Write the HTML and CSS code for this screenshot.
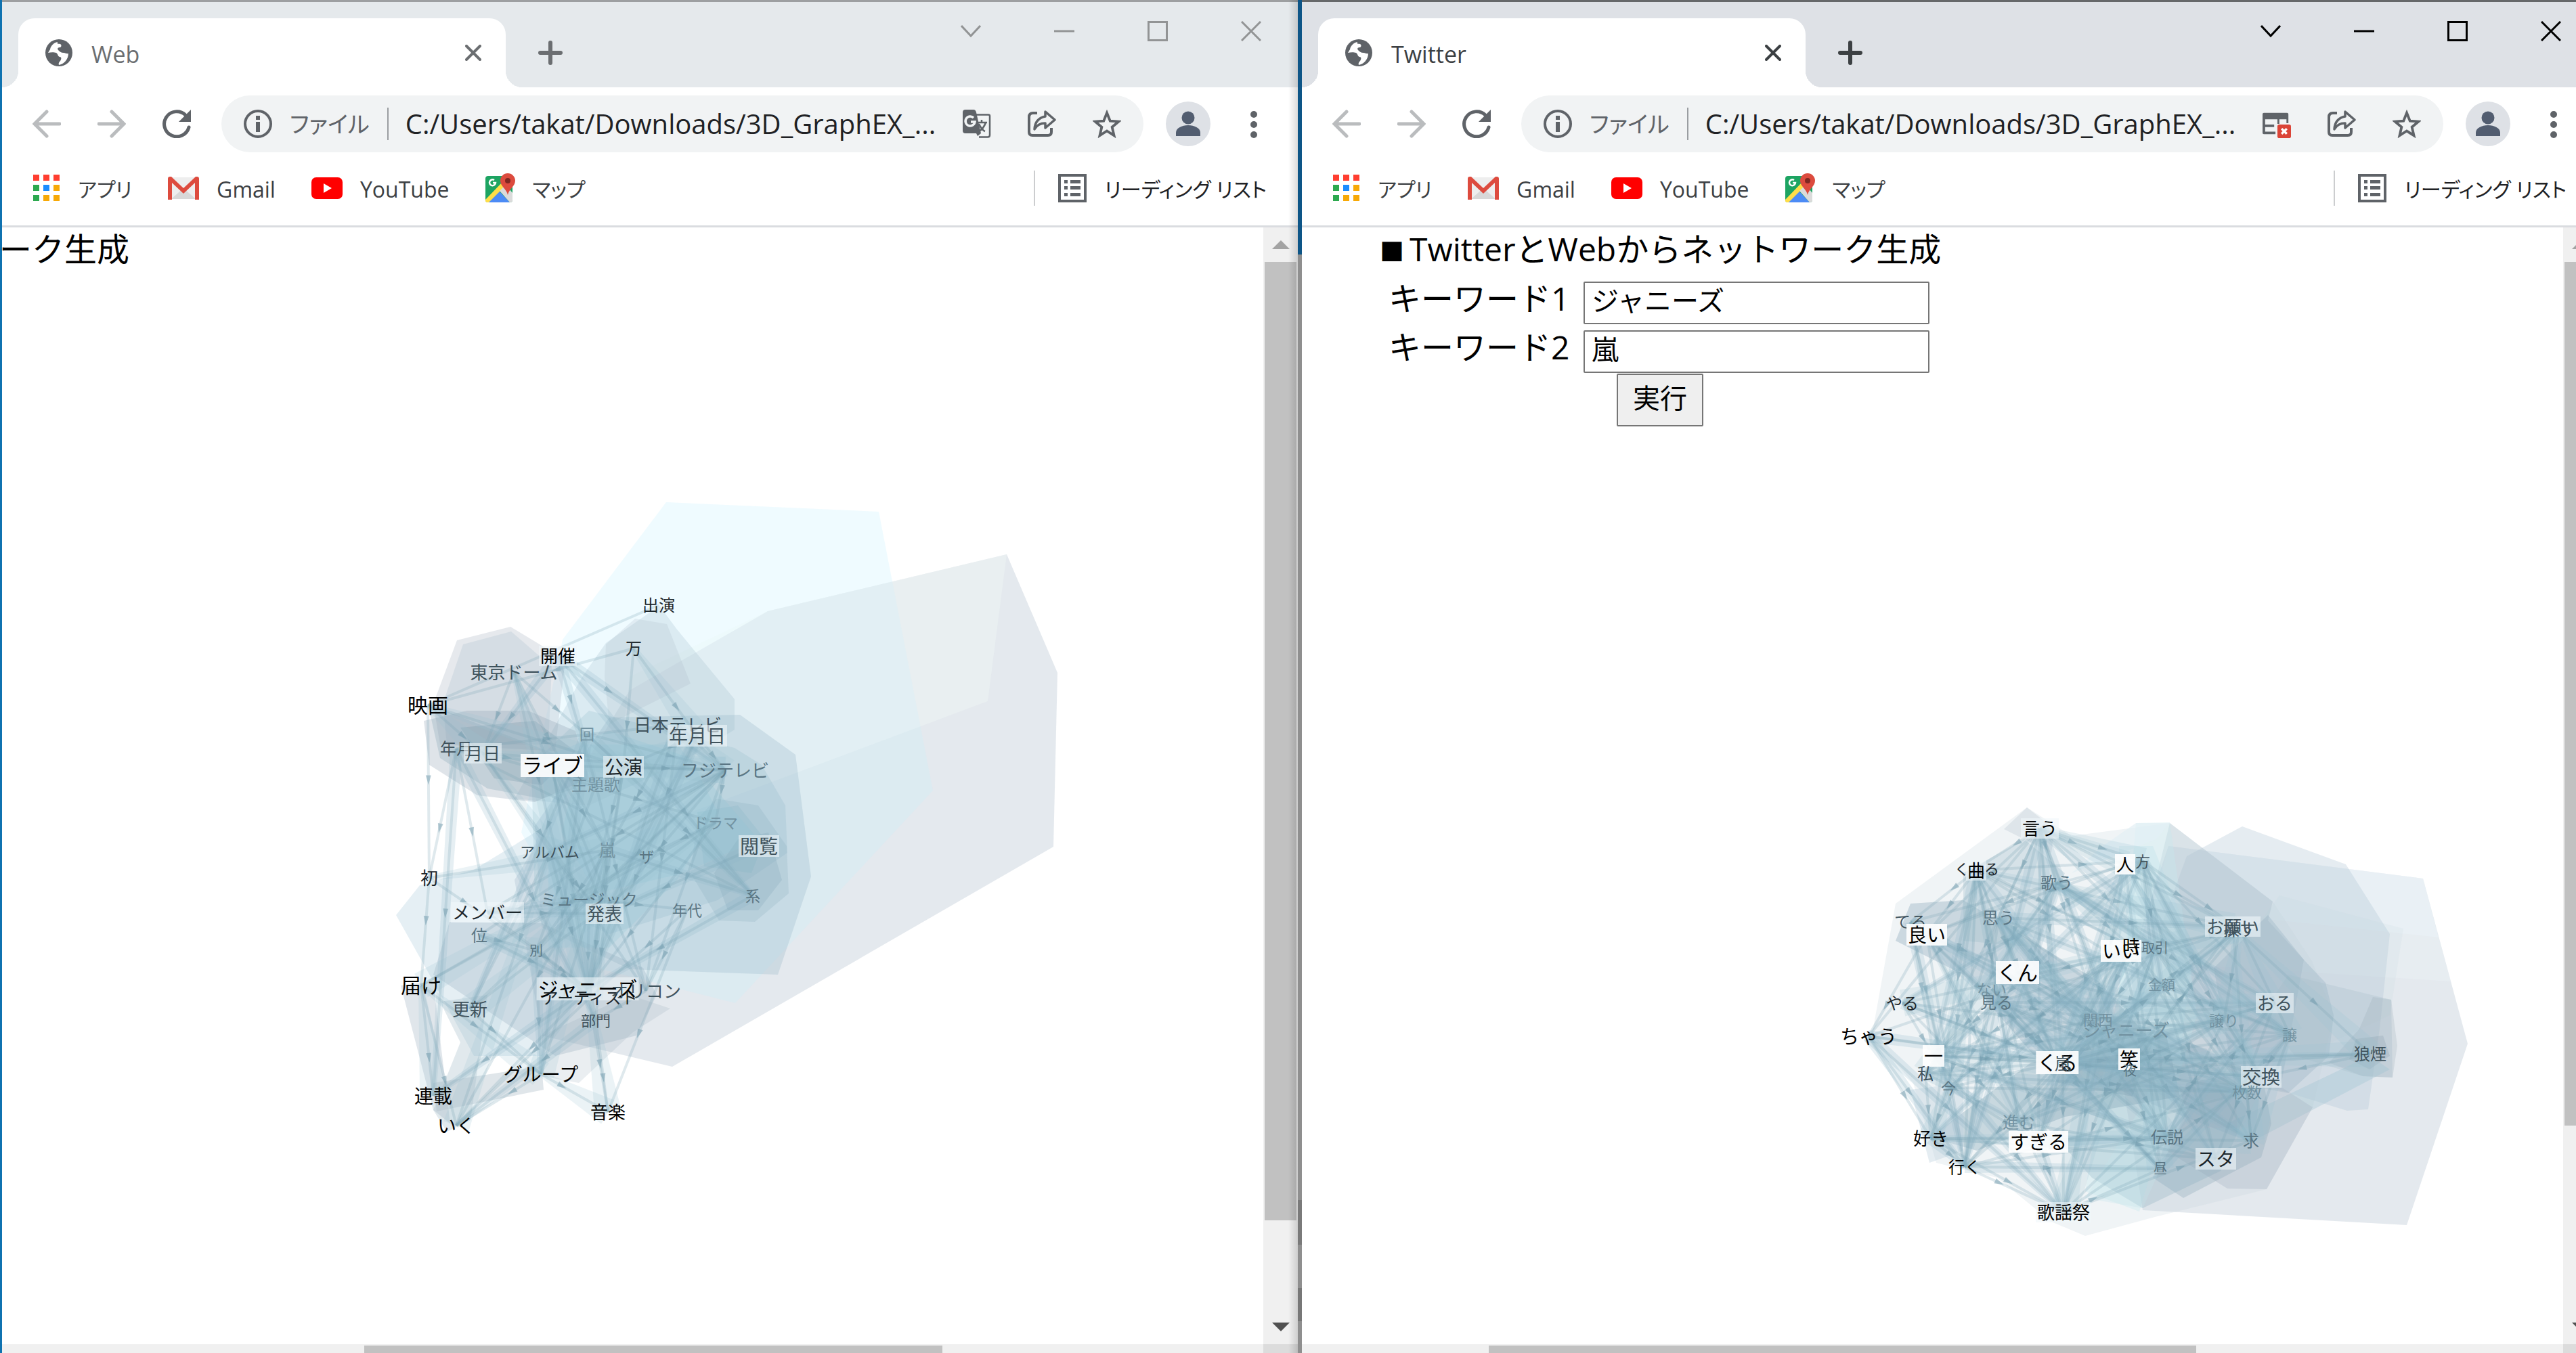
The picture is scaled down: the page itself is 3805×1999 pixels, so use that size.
FILE: index.html
```html
<!DOCTYPE html>
<html lang="ja">
<head>
<meta charset="utf-8">
<title>Web / Twitter</title>
<link rel="stylesheet" href="styles.css">
</head>
<body>
<svg class="sprite" aria-hidden="true">
  <symbol id="i-globe" viewBox="0 0 42 42"><circle cx="21" cy="21" r="20" fill="#5f6368"/><path fill="#fff" d="M19 5c-5 1-10 5-11 11l-3 5c4-1 9-1 12 0 3 2 2 5 5 6 3 0 3 3 1 6-2 2-3 4-2 6 7-1 14-8 14-17-3 1-4-1-7-1-4 0-6-2-8-4-2-3 0-4 3-4 2-1 2-4 0-5-3-1-5 1-4-3z"/></symbol>
  <symbol id="i-close" viewBox="0 0 24 24"><path d="M2 2l20 20M22 2L2 22" fill="none" stroke="currentColor" stroke-width="4" stroke-linecap="round"/></symbol>
  <symbol id="i-plus" viewBox="0 0 36 36"><path d="M18 3v30M3 18h30" fill="none" stroke="currentColor" stroke-width="6" stroke-linecap="round"/></symbol>
  <symbol id="i-chev" viewBox="0 0 30 30"><path d="M1 7l14 15L29 7" fill="none" stroke="currentColor" stroke-width="3"/></symbol>
  <symbol id="i-min" viewBox="0 0 30 30"><path d="M0 15h30" fill="none" stroke="currentColor" stroke-width="3"/></symbol>
  <symbol id="i-max" viewBox="0 0 30 30"><path d="M1.500 1.500h27v27h-27z" fill="none" stroke="currentColor" stroke-width="3"/></symbol>
  <symbol id="i-x" viewBox="0 0 30 30"><path d="M1 1l28 28M29 1L1 29" fill="none" stroke="currentColor" stroke-width="3"/></symbol>
  <symbol id="i-back" viewBox="0 0 42 42"><path d="M40 21H4M21 3L3 21l18 18" fill="none" stroke="currentColor" stroke-width="5" stroke-linecap="round"/></symbol>
  <symbol id="i-fwd" viewBox="0 0 42 42"><path d="M2 21h36M21 3l18 18-18 18" fill="none" stroke="currentColor" stroke-width="5" stroke-linecap="round"/></symbol>
  <symbol id="i-reload" viewBox="0 0 42 42"><path d="M39 26A18.500 18.500 0 1 1 34 8" fill="none" stroke="currentColor" stroke-width="5" stroke-linecap="round"/><path d="M42 0v18H24z" fill="currentColor"/></symbol>
  <symbol id="i-info" viewBox="0 0 42 42"><circle cx="21" cy="21" r="19" fill="none" stroke="currentColor" stroke-width="4"/><path d="M18 18h6v15h-6zM18 9h6v6h-6z" fill="currentColor"/></symbol>
  <symbol id="i-translate" viewBox="0 0 42 42"><path d="M20 7.500h18q2 0 2 2v28q0 3-3 3H24" fill="none" stroke="currentColor" stroke-width="2.500"/><path d="M4 0h12q3 0 4 4l7 31-5 4-2-4H4q-4 0-4-4V4q0-4 4-4z" fill="currentColor"/><path d="M16 12a7 7 0 1 0 2 6h-6" fill="none" stroke="#f1f3f4" stroke-width="3.500"/><path d="M21 19h15M28 15v4M34 19q-3 9-10 13M24 21q4 9 9 11" fill="none" stroke="currentColor" stroke-width="2.500"/></symbol>
  <symbol id="i-share" viewBox="0 0 42 42"><path d="M14 5H8Q2 5 2 11v22q0 5 5 5h23q5 0 5-5v-6" fill="none" stroke="currentColor" stroke-width="4"/><path d="M26 3l14 12-14 12v-7q-11 0-16 9 1-16 16-19z" fill="none" stroke="currentColor" stroke-width="3.500" stroke-linejoin="round"/></symbol>
  <symbol id="i-star" viewBox="0 0 44 44"><path d="M22 5l5 12.500 13 1-10 8.500 3 13-11-7-11 7 3-13-10-8.500 13-1z" fill="none" stroke="currentColor" stroke-width="4"/></symbol>
  <symbol id="i-blocked" viewBox="0 0 44 44"><path d="M2 5h36q2 0 2 2v14h-3v-6H26v7h-3v-7H4v8h14v4H4v7h16v4H2q-2 0-2-2V7q0-2 2-2z" fill="currentColor"/><rect x="23" y="23" width="21" height="21" rx="3" fill="#db4437"/><path d="M29.500 29.500l8 8M37.500 29.500l-8 8" stroke="#fff" stroke-width="3.500"/></symbol>
  <symbol id="i-user" viewBox="0 0 66 66"><circle cx="33" cy="33" r="33" fill="#dee1e6"/><circle cx="33" cy="24" r="9.500" fill="#525d70"/><path d="M15 51v-5c0-7 9-11 18-11s18 4 18 11v5z" fill="#525d70"/></symbol>
  <symbol id="i-dots" viewBox="0 0 12 42"><circle cx="6" cy="7" r="5" fill="currentColor"/><circle cx="6" cy="22" r="5" fill="currentColor"/><circle cx="6" cy="37" r="5" fill="currentColor"/></symbol>
  <symbol id="i-apps" viewBox="0 0 40 40"><path fill="#ff3e30" d="M0 0h9v9H0zM15 0h9v9h-9zM30 0h9v9h-9z"/><path fill="#2da94f" d="M0 15h9v9H0zM0 30h9v9H0z"/><path fill="#1a8cff" d="M15 15h9v9h-9z"/><path fill="#f7a907" d="M30 15h9v9h-9zM15 30h9v9h-9zM30 30h9v9h-9z"/></symbol>
  <symbol id="i-gmail" viewBox="0 0 46 36"><path fill="#eee" d="M4 2h38v32H4z"/><path fill="#d8d8d8" d="M5 34l18-16 18 16z"/><path fill="#dd4b3e" d="M0 4q0-3 3-3h2l18 17L41 1h2q3 0 3 3v31h-6V10L23 26 6 10v25H0z"/></symbol>
  <symbol id="i-yt" viewBox="0 0 46 32"><rect width="46" height="32" rx="7" fill="#f00"/><path fill="#fff" d="M18 9l12 7-12 7z"/></symbol>
  <symbol id="i-map" viewBox="0 0 44 44"><rect x="0" y="4" width="40" height="39" rx="4" fill="#1da462"/><path fill="#4c8bf5" d="M4 43l16-17 16 17z"/><path fill="#ffde48" d="M0 39L27 11l5 5L5 43H3q-3 0-3-3z"/><path fill="#dbdbdb" d="M21 26l9-9 10 12v11q0 3-4 3z"/><path fill="none" stroke="#fff" stroke-width="2.500" d="M13 10a4.500 4.500 0 1 0 2 4h-4"/><path fill="#dc4b3e" d="M33 0a11 11 0 0 1 11 11c0 8-9 12-11 21-2-9-11-13-11-21A11 11 0 0 1 33 0z"/><circle cx="33" cy="11" r="4" fill="#7e2721"/></symbol>
  <symbol id="i-list" viewBox="0 0 42 42"><path d="M2 2h38v38H2z" fill="none" stroke="currentColor" stroke-width="4"/><path fill="currentColor" d="M9 9h5v5H9zM18 9h15v5H18zM9 18h5v5H9zM18 18h15v5H18zM9 28h5v5H9zM18 28h15v5H18z"/></symbol>
</svg>

<div class="desktop">
  <section class="window window--idle">
    <header class="tabstrip">
      <div class="tab">
        <svg class="ico42"><use href="#i-globe"/></svg>
        <span class="tab-title">Web</span>
        <button class="bare" aria-label="タブを閉じる"><svg class="ico24"><use href="#i-close"/></svg></button>
      </div>
      <button class="bare newtab" aria-label="新しいタブ"><svg class="ico36"><use href="#i-plus"/></svg></button>
      <div class="winbtns">
        <button class="bare" aria-label="タブを検索"><svg class="ico30"><use href="#i-chev"/></svg></button>
        <button class="bare" aria-label="最小化"><svg class="ico30"><use href="#i-min"/></svg></button>
        <button class="bare" aria-label="最大化"><svg class="ico30"><use href="#i-max"/></svg></button>
        <button class="bare" aria-label="閉じる"><svg class="ico30"><use href="#i-x"/></svg></button>
      </div>
    </header>
    <div class="toolbar">
      <button class="bare dim" aria-label="戻る"><svg class="ico42"><use href="#i-back"/></svg></button>
      <button class="bare dim" aria-label="進む"><svg class="ico42"><use href="#i-fwd"/></svg></button>
      <button class="bare" aria-label="再読み込み"><svg class="ico42"><use href="#i-reload"/></svg></button>
      <div class="omnibox">
        <svg class="ico42"><use href="#i-info"/></svg>
        <span class="scheme">ファイル</span>
        <span class="url">C:/Users/takat/Downloads/3D_GraphEX_...</span>
        <button class="bare" aria-label="翻訳"><svg class="ico42"><use href="#i-translate"/></svg></button>
        <button class="bare" aria-label="共有"><svg class="ico42"><use href="#i-share"/></svg></button>
        <button class="bare" aria-label="ブックマーク"><svg class="ico42"><use href="#i-star"/></svg></button>
      </div>
      <button class="bare avatar" aria-label="プロフィール"><svg class="ico66"><use href="#i-user"/></svg></button>
      <button class="bare menu" aria-label="メニュー"><svg class="icodots"><use href="#i-dots"/></svg></button>
    </div>
    <nav class="bookmarks">
      <a href="#apps"><svg class="ico40"><use href="#i-apps"/></svg><span class="kana">アプリ</span></a>
      <a href="#gmail"><svg class="ico46"><use href="#i-gmail"/></svg><span>Gmail</span></a>
      <a href="#youtube"><svg class="ico46"><use href="#i-yt"/></svg><span>YouTube</span></a>
      <a href="#maps"><svg class="ico44"><use href="#i-map"/></svg><span class="kana">マップ</span></a>
      <a href="#reading" class="reading"><svg class="ico42"><use href="#i-list"/></svg><span class="kana">リーディング リスト</span></a>
    </nav>
    <div class="viewport">
      <main class="page page--scrolled">
        <div class="graph" id="graph-web"></div>
        <h1>ーク生成</h1>
      </main>
      <div class="vbar"><i class="up"></i><div class="track"><div class="thumb thumb--v1"></div></div><i class="down"></i></div>
      <div class="hbar"><div class="thumb thumb--h1"></div></div>
      <div class="corner"></div>
    </div>
  </section>

  <section class="window window--active">
    <header class="tabstrip">
      <div class="tab">
        <svg class="ico42"><use href="#i-globe"/></svg>
        <span class="tab-title">Twitter</span>
        <button class="bare" aria-label="タブを閉じる"><svg class="ico24"><use href="#i-close"/></svg></button>
      </div>
      <button class="bare newtab" aria-label="新しいタブ"><svg class="ico36"><use href="#i-plus"/></svg></button>
      <div class="winbtns">
        <button class="bare" aria-label="タブを検索"><svg class="ico30"><use href="#i-chev"/></svg></button>
        <button class="bare" aria-label="最小化"><svg class="ico30"><use href="#i-min"/></svg></button>
        <button class="bare" aria-label="最大化"><svg class="ico30"><use href="#i-max"/></svg></button>
        <button class="bare" aria-label="閉じる"><svg class="ico30"><use href="#i-x"/></svg></button>
      </div>
    </header>
    <div class="toolbar">
      <button class="bare dim" aria-label="戻る"><svg class="ico42"><use href="#i-back"/></svg></button>
      <button class="bare dim" aria-label="進む"><svg class="ico42"><use href="#i-fwd"/></svg></button>
      <button class="bare" aria-label="再読み込み"><svg class="ico42"><use href="#i-reload"/></svg></button>
      <div class="omnibox">
        <svg class="ico42"><use href="#i-info"/></svg>
        <span class="scheme">ファイル</span>
        <span class="url">C:/Users/takat/Downloads/3D_GraphEX_...</span>
        <button class="bare" aria-label="ポップアップをブロック"><svg class="ico42"><use href="#i-blocked"/></svg></button>
        <button class="bare" aria-label="共有"><svg class="ico42"><use href="#i-share"/></svg></button>
        <button class="bare" aria-label="ブックマーク"><svg class="ico42"><use href="#i-star"/></svg></button>
      </div>
      <button class="bare avatar" aria-label="プロフィール"><svg class="ico66"><use href="#i-user"/></svg></button>
      <button class="bare menu" aria-label="メニュー"><svg class="icodots"><use href="#i-dots"/></svg></button>
    </div>
    <nav class="bookmarks">
      <a href="#apps"><svg class="ico40"><use href="#i-apps"/></svg><span class="kana">アプリ</span></a>
      <a href="#gmail"><svg class="ico46"><use href="#i-gmail"/></svg><span>Gmail</span></a>
      <a href="#youtube"><svg class="ico46"><use href="#i-yt"/></svg><span>YouTube</span></a>
      <a href="#maps"><svg class="ico44"><use href="#i-map"/></svg><span class="kana">マップ</span></a>
      <a href="#reading" class="reading"><svg class="ico42"><use href="#i-list"/></svg><span class="kana">リーディング リスト</span></a>
    </nav>
    <div class="viewport">
      <main class="page">
        <div class="graph" id="graph-twitter"></div>
        <h1 class="title"><span class="mark">■</span>TwitterとWebからネットワーク生成</h1>
        <form class="query">
          <label for="kw1">キーワード1</label><input id="kw1" type="text" value="ジャニーズ">
          <label for="kw2">キーワード2</label><input id="kw2" type="text" value="嵐">
          <button type="button" class="run">実行</button>
        </form>
      </main>
      <div class="vbar"><i class="up"></i><div class="track"><div class="thumb thumb--v2"></div></div><i class="down"></i></div>
      <div class="hbar"><div class="thumb thumb--h2"></div></div>
      <div class="corner"></div>
    </div>
  </section>
</div>
<script src="graph.js"></script>
</body>
</html>
```

FILE: styles.css
```css
* { box-sizing: border-box; }
html { height: 100%; overflow: hidden; }
body {
  margin: 0;
  height: 100%;
  overflow: hidden;
  background: #fff;
  color: #3c4043;
  font-family: "Open Sans", "Noto Sans CJK JP", sans-serif;
}
.sprite { display: none; }
/* the second window hangs over the right and bottom screen edges */
.desktop {
  display: flex;
  width: calc(100% + 32px);
  height: calc(100% + 38px);
}
.window {
  flex: 1 1 0;
  min-width: 0;
  display: flex;
  flex-direction: column;
  position: relative;
  background: #fff;
}
.window--idle { border-left: 3px solid #0f72b0; --strip: #e5e9ec; --edge: #9d9fa1; --ctl: #929495; --tabx: #6b6e71; }
.window--idle::after {
  content: "";
  position: absolute;
  inset: 0 0 0 auto;
  width: 14px;
  background: linear-gradient(90deg, transparent, rgba(0, 0, 0, .14));
}
.window--active {
  --strip: #dee1e6; --edge: #66686a; --ctl: #000; --tabx: #3c4043;
  padding-left: 6px;
  background:
    linear-gradient(#0d5587 376px, #8f8f8f 376px, #8f8f8f 1773px, #7a7a7a 1773px, #7a7a7a 1839px, #8f8f8f 1839px, #8f8f8f 1903px, #777 1903px, #777 1952px, #8f8f8f 1952px) 0 0 / 6px 100% no-repeat,
    #fff;
}
.bare {
  border: 0;
  padding: 0;
  background: none;
  color: #5f6368;
  display: flex;
  align-items: center;
  justify-content: center;
}
svg { display: block; flex: none; }
.ico24 { width: 24px; height: 24px; }
.ico30 { width: 30px; height: 30px; }
.ico36 { width: 36px; height: 36px; }
.ico40 { width: 40px; height: 40px; }
.ico42 { width: 42px; height: 42px; }
.ico44 { width: 44px; height: 44px; }
.ico46 { width: 46px; height: 36px; }
.ico66 { width: 66px; height: 66px; }
.icodots { width: 12px; height: 42px; }

.tabstrip {
  display: flex;
  height: 129px;
  border-top: 3px solid var(--edge);
  background: var(--strip);
  padding: 24px 0 0 24px;
}
.tab {
  position: relative;
  width: 720px;
  display: flex;
  align-items: center;
  gap: 27px;
  padding: 0 36px 0 39px;
  background: #fff;
  border-radius: 24px 24px 0 0;
}
.tab::before, .tab::after {
  content: "";
  position: absolute;
  bottom: 0;
  width: 24px;
  height: 24px;
}
.tab::before { right: 100%; background: radial-gradient(circle at 0 0, transparent 24px, #fff 24px); }
.tab::after { left: 100%; background: radial-gradient(circle at 100% 0, transparent 24px, #fff 24px); }
.tab-title { flex: 1; padding-top: 4px; font-size: 34px; line-height: 48px; color: var(--tabx); }
.tab .bare, .newtab { color: var(--tabx); }
.newtab { width: 132px; }
.winbtns { display: flex; margin-left: auto; margin-top: -24px; height: 86px; }
.winbtns .bare { width: 138px; color: var(--ctl); }

.toolbar { display: flex; align-items: center; height: 108px; padding-left: 45px; }
.toolbar > .bare { width: 42px; margin-right: 54px; }
.toolbar > .dim { color: #babcbe; }
.toolbar > .bare:nth-child(3) { margin-right: 45px; }
.omnibox {
  flex: 1;
  min-width: 0;
  display: flex;
  align-items: center;
  height: 84px;
  padding: 0 33px;
  border-radius: 42px;
  background: #f1f3f4;
  color: #5f6368;
}
.omnibox .bare { margin-left: 54px; }
.omnibox .url + .bare { margin-left: 0; }
.scheme {
  margin-left: 26px;
  padding-right: 26px;
  border-right: 2px solid #9a9da1;
  font-size: 34px;
  line-height: 48px;
  font-feature-settings: "palt";
}
.url {
  flex: 1;
  min-width: 0;
  padding-left: 25px;
  font-size: 40px;
  line-height: 48px;
  color: #202124;
  white-space: nowrap;
}
.toolbar > .avatar { width: 66px; margin: 0 0 0 33px; }
.toolbar > .menu { width: 12px; margin: 0 59px 0 58px; }

.bookmarks {
  display: flex;
  align-items: center;
  gap: 53px;
  height: 99px;
  padding: 0 46px 15px;
  border-bottom: 3px solid #dadce0;
}
.bookmarks a {
  display: flex;
  align-items: center;
  gap: 26px;
  color: #3c4043;
  text-decoration: none;
  font-size: 32px;
  line-height: 48px;
  white-space: nowrap;
}
.bookmarks span { padding-top: 4px; }
.bookmarks .kana { font-size: 30px; font-feature-settings: "palt"; }
.bookmarks .reading { margin-left: auto; padding-left: 34px; border-left: 2px solid #cccdcf; color: #202124; }
.bookmarks .reading svg { color: #5f6368; }

.viewport {
  flex: 1;
  min-height: 0;
  display: grid;
  grid-template: minmax(0, 1fr) 51px / minmax(0, 1fr) 51px;
}
.page { position: relative; overflow: hidden; color: #000; }
.page h1 {
  position: relative;
  margin: 0;
  font-size: 48px;
  line-height: 64px;
  font-weight: 400;
  white-space: nowrap;
}
.page--scrolled h1 { margin-left: -4px; }
.page .title { padding-left: 115px; }
.mark { margin-right: 8px; font-size: 36px; line-height: 48px; }
.query {
  position: relative;
  display: grid;
  grid-template-columns: 272px 511px;
  gap: 9px 16px;
  padding: 16px 0 0 128px;
  font-size: 48px;
  line-height: 50px;
}
.query input {
  height: 63px;
  border: 2px solid #767676;
  border-radius: 2px;
  padding: 0 10px 12px;
  font: 40px "Open Sans", "Noto Sans CJK JP", sans-serif;
  color: #000;
}
.run {
  grid-column: 2;
  width: 128px;
  height: 78px;
  margin: -8px 0 0 49px;
  border: 2px solid #767676;
  border-radius: 2px;
  padding: 0 0 10px;
  background: #efefef;
  color: #000;
  font: 40px "Noto Sans CJK JP", sans-serif;
}

.vbar { display: flex; flex-direction: column; background: #f0f0f0; }
.track { flex: 1; }
.up, .down { height: 51px; display: grid; place-items: center; }
.up::before, .down::before { content: ""; border: 13px solid transparent; }
.up::before { border-top: 0; border-bottom-color: #a3a3a3; }
.down::before { border-bottom: 0; border-top-color: #505050; }
.thumb { background: #c1c1c1; }
.track .thumb { margin: 0 2px; }
.thumb--v1 { height: 91.5%; }
.thumb--v2 { height: 82.4%; }
.hbar { background: #f0f0f0; padding: 2px 51px; }
.hbar .thumb { height: 47px; }
.thumb--h1 { width: 48.5%; margin-left: 27.5%; }
.thumb--h2 { width: 59.3%; margin-left: 12.8%; }
.corner { background: #dcdcdc; }

.graph { position: absolute; inset: 0; }
.graph svg { position: absolute; inset: 0; width: 100%; height: 100%; }
.node {
  position: absolute;
  transform: translate(-50%, -50%);
  line-height: 1;
  padding: 2px;
  white-space: nowrap;
  color: #000;
}
.s20 { font-size: 20px; }
.s22 { font-size: 22px; }
.s24 { font-size: 24px; }
.s26 { font-size: 26px; }
.s28 { font-size: 28px; }
.s30 { font-size: 30px; }
.t1 { color: #1c262b; }
.t2 { color: #3f525c; }
.t3 { color: #5a7583; }
.t4 { color: #7292a1; }
.box { background: rgba(255, 255, 255, .9); }
.haze { background: rgba(240, 247, 250, .6); }
```

FILE: graph.js
```js
// node: x, y, label, font size, tone (0 near .. 4 far), plate
const web = {
  origin: [3, 336], seed: 7, reach: 520, density: 0.1, hubDensity: 0.45,
  links: ["27-36", "33-36", "24-36", "32-36", "18-28", "28-34", "28-35", "29-33", "4-18", "5-18"],
  faces: [
    ["984,742 1298,756 1378,1168 1086,1482 880,1430 770,1230 831,945", "#ecfbff", .55],
    ["1134,903 1487,819 1562,994 1556,1251 993,1576 800,1530 760,1300 930,1020", "#b4c3cf", .36],
    ["1134,903 1487,819 1459,1036 900,1245 930,1000", "#f0faf8", .36],
    ["984,742 1298,756 1378,1168 1086,1482 880,1430 770,1230 831,945", "#daf5ff", .22],
    ["754,926 675,946 640,1040 650,1100 820,1110 835,975", "#b0bac8", .32],
    ["755,933 684,952 654,1040 660,1100 810,1100 815,985", "#b6c6d4", .34],
    ["974,895 1000,930 1085,1033 1085,1078 1000,1130 870,1190 760,1180 860,1000 895,950", "#9bb9ca", .24],
    ["938,914 985,922 1020,1010 900,1070 893,1000 895,952", "#a5b5c2", .2],
    ["1093,1056 1175,1115 1198,1295 1149,1440 930,1432 800,1370 790,1220 900,1060", "#8fb0c4", .27],
    ["1085,1105 1125,1130 1160,1190 1163,1260 1060,1330 900,1380 790,1330 785,1130 870,1050", "#8db7ca", .24],
    ["626,1065 634,1130 705,1175 790,1185 870,1150 850,1080 780,1050 690,1050", "#8b9fb0", .28],
    ["632,1040 720,1075 860,1130 850,1165 800,1180 720,1165 650,1120", "#87a5b7", .3],
    ["680,1075 790,1065 850,1110 800,1160 730,1150", "#7a9aac", .3],
    ["585,1352 620,1308 700,1285 790,1230 890,1260 885,1440 800,1560 700,1560 640,1450", "#9cc2d4", .26],
    ["664,1362 800,1364 950,1430 970,1470 940,1530 820,1560 640,1440", "#90a8ba", .28],
    ["1058,1180 1120,1190 1162,1250 1165,1320 1115,1362 1062,1360 1020,1290 1030,1210", "#83a9bb", .22],
    ["1090,1240 1135,1230 1155,1300 1120,1345 1075,1345 1055,1290", "#7a9fb2", .22],
    ["1030,1200 1090,1190 1130,1240 1110,1290 1040,1280", "#7fb2c6", .22],
    ["800,1120 900,1080 1020,1120 1060,1200 1000,1300 900,1400 810,1400 810,1250", "#8fc3d4", .22],
    ["860,1100 1000,1100 1120,1240 1010,1290 880,1320 830,1230", "#8fc3d4", .22],
    ["592,1456 640,1450 665,1660 640,1640", "#a4b6c4", .34],
    ["640,1640 680,1540 650,1480 720,1470 708,1560 695,1655 660,1672", "#9db5c5", .3],
    ["640,1600 800,1575 803,1610 645,1642", "#a9b9c6", .36],
    ["800,1530 930,1470 990,1490 935,1525 855,1600 800,1590", "#98abb9", .2]
  ],
  hubs: [20, 12, 27],
  nodes: [
    [973,894,"出演",24,1],[936,958,"万",24,1],[824,969,"開催",26,0,"haze"],[759,993,"東京ドーム",26,2],
    [632,1042,"映画",30,0],[674,1106,"年月",24,2],[713,1113,"月日",26,2,"haze"],[867,1084,"回",22,4],
    [1001,1071,"日本テレビ",26,2],[1030,1087,"年月日",28,2,"haze"],[816,1131,"ライブ",30,0,"box"],[921,1133,"公演",28,1,"haze"],
    [1071,1138,"フジテレビ",26,3],[880,1159,"主題歌",24,4],[1057,1215,"ドラマ",22,4],[1121,1250,"閲覧",28,2,"haze"],
    [812,1258,"アルバム",22,2],[955,1265,"ザ",22,3],[634,1297,"初",26,1],[870,1329,"ミュージック",24,3],
    [897,1256,"嵐",24,4],[720,1348,"メンバー",26,1,"haze"],[893,1350,"発表",26,2,"haze"],[1112,1323,"系",22,3],
    [1015,1344,"年代",22,3],[708,1382,"位",24,3],[792,1405,"別",20,3],[868,1461,"ジャニーズ",30,0,"haze"],
    [622,1456,"届け",30,0],[694,1491,"更新",26,2],[871,1474,"アーティスト",24,1],[954,1464,"オリコン",26,2],
    [880,1507,"部門",22,2],[799,1587,"グループ",28,0],[640,1619,"連載",28,0],[674,1663,"いく",28,0],[898,1643,"音楽",26,0]
  ]
};

const twitter = {
  origin: [1923, 336], seed: 3, reach: 480, density: 0.2, hubDensity: 0.5,
  links: ["17-27", "0-4", "27-30", "30-31", "34-39", "39-40"],
  faces: [
    ["3203,1250 3579,1298 3645,1542 3555,1810 3165,1788 3120,1500", "#b4c3cf", .36],
    ["3203,1250 3579,1298 3602,1385 3180,1340", "#f0fbff", .25],
    ["3203,1250 3579,1298 3620,1450 3150,1420", "#f0fbff", .22],
    ["3312,1221 3465,1277 3530,1380 3515,1520 3498,1639 3467,1641 3300,1590 3180,1400 3230,1265", "#b3c8d5", .34],
    ["3367,1323 3550,1372 3530,1500 3400,1560 3280,1450 3340,1360", "#c2d2dc", .14],
    ["2994,1193 3060,1235 3205,1216 3357,1332 3415,1420 3447,1500 3416,1636 3348,1757 3183,1798 3080,1826 3030,1805 2950,1740 2860,1718 2826,1600 2765,1530 2800,1335", "#c3d3dc", .25],
    ["3205,1216 3357,1332 3350,1360 3403,1418 3370,1600 3200,1640 3160,1400", "#9cb2c2", .26],
    ["3155,1216 3205,1215 3245,1500 3160,1790 3080,1760 3140,1400", "#c6e9ef", .35],
    ["3106,1250 3155,1216 3205,1216 3185,1240 3060,1290", "#e2eff5", .7],
    ["3350,1352 3403,1418 3435,1452 3447,1500 3440,1560 3380,1615 3300,1600 3270,1430", "#86a8ba", .26],
    ["3380,1440 3532,1477 3534,1592 3490,1590 3390,1560 3340,1500", "#9db7c4", .24],
    ["3505,1473 3532,1477 3541,1545 3534,1592 3490,1590 3440,1570 3485,1520", "#91a5b3", .22],
    ["3480,1535 3520,1530 3530,1560 3500,1580 3470,1565", "#7b93a2", .22],
    ["3320,1690 3530,1580 3500,1560 3290,1660", "#9fc2d0", .35],
    ["3416,1636 3348,1757 3290,1756 3200,1700 3260,1600 3360,1600", "#a3b1c0", .3],
    ["3230,1600 3340,1580 3355,1660 3340,1710 3225,1770 3180,1740", "#88a4b6", .3],
    ["3120,1500 3260,1550 3320,1640 3280,1730 3165,1785 3090,1740 3000,1640", "#7fa6b8", .26],
    ["3160,1640 3200,1560 3230,1640 3165,1785 3080,1770", "#c5e6ec", .3],
    ["3130,1250 3180,1250 3240,1400 3220,1560 3130,1560", "#b4dbe6", .25],
    ["2822,1335 2900,1330 3100,1450 3180,1540 3150,1620 3040,1600 2900,1440 2800,1390", "#7c9eb1", .32],
    ["2850,1680 3000,1570 3200,1530 3220,1620 3050,1650 2920,1700", "#7ba2b4", .34],
    ["3040,1560 3150,1500 3340,1590 3330,1690 3150,1620", "#7fa9bb", .25],
    ["2900,1290 2990,1240 3050,1290 3010,1400 2900,1390", "#9db9c8", .3],
    ["2822,1610 2900,1600 2900,1700 2850,1718", "#bdd2de", .4],
    ["2994,1193 3035,1225 3030,1260 2960,1225", "#b5c2ce", .3]
  ],
  hubs: [24, 22, 0, 31, 8],
  nodes: [
    [3013,1224,"言う",26,0,"haze"],[2920,1283,"くれる",22,1],[2919,1286,"曲",26,0,"haze"],[3038,1304,"歌う",24,3],
    [3139,1277,"人",26,0,"box"],[3165,1272,"方",22,2],[2822,1362,"てる",24,2],[2952,1356,"思う",24,3],
    [2846,1381,"良い",28,0,"box"],[2980,1437,"くん",30,0,"box"],[3133,1405,"いい",28,0,"box"],[3148,1398,"時",26,0],
    [3183,1401,"取引",20,3],[2810,1482,"やる",24,1],[2942,1461,"ない",22,4],[2949,1481,"見る",24,3],
    [3193,1456,"金額",20,4],[2760,1531,"ちゃう",28,0],[2856,1560,"一",28,0,"box"],[3141,1522,"ジャニーズ",26,4],
    [3099,1506,"関西",22,4],[2844,1586,"私",24,2],[3039,1570,"くる",30,0,"box"],[2878,1607,"今",22,3],
    [3047,1571,"嵐",24,2],[3145,1565,"笑",28,0,"box"],[3146,1582,"夜",20,3],[2852,1682,"好き",26,0],
    [2982,1658,"進む",24,4],[3011,1687,"すぎる",28,0,"box"],[2902,1724,"行く",24,0],[3048,1791,"歌謡祭",26,0,"haze"],
    [3201,1680,"伝説",24,3],[3191,1727,"昼",20,3],[3298,1369,"お願い",26,2,"haze"],[3308,1373,"操す",24,2],
    [3360,1482,"おる",26,2,"haze"],[3285,1507,"譲り",22,4],[3382,1528,"譲",22,4],[3501,1557,"狼煙",24,2],
    [3340,1591,"交換",28,2,"haze"],[3319,1613,"枚数",22,4],[3325,1685,"求",24,3],[3273,1712,"スタ",28,1,"haze"]
  ]
};

const NS = "http://www.w3.org/2000/svg";

function draw(id, g) {
  const host = document.getElementById(id);
  const svg = document.createElementNS(NS, "svg");
  const layer = document.createElementNS(NS, "g");
  layer.setAttribute("transform", `translate(${-g.origin[0]} ${-g.origin[1]})`);
  svg.append(layer);
  host.append(svg);

  const poly = (points, fill, opacity) => {
    const p = document.createElementNS(NS, "polygon");
    p.setAttribute("points", points);
    p.setAttribute("fill", fill);
    p.setAttribute("fill-opacity", opacity);
    layer.append(p);
  };
  g.faces.forEach(f => poly(...f));

  let s = g.seed;
  const rnd = () => (s = (s * 16807) % 2147483647) / 2147483647;
  for (let i = 0; i < 8; i++) rnd();

  g.nodes.forEach((a, i) => g.nodes.forEach((b, j) => {
    if (j <= i) return;
    const dx = b[0] - a[0], dy = b[1] - a[1], d = Math.hypot(dx, dy);
    const hub = g.hubs.includes(i) || g.hubs.includes(j);
    const pick = rnd(), wide = rnd(), at = rnd();
    const near = d >= 60 && d <= g.reach && pick <= (hub ? g.hubDensity : g.density);
    if (!near && !g.links.includes(`${i}-${j}`)) return;
    const nx = -dy / d, ny = dx / d;
    const strip = (w0, w1, fill, op) => poly(
      `${a[0] + nx * w0},${a[1] + ny * w0} ${b[0] + nx * w1},${b[1] + ny * w1} ` +
      `${b[0] - nx * w1},${b[1] - ny * w1} ${a[0] - nx * w0},${a[1] - ny * w0}`, fill, op);
    if (wide < 0.2) strip(4, 20, "#9dc3d3", .2);
    else if (wide < 0.45) strip(9, 4, "#8fb8ca", .22);
    strip(2, 2, "#7ba3b4", .24);
    const t = .3 + at * .4, cx = a[0] + dx * t, cy = a[1] + dy * t, ux = dx / d, uy = dy / d;
    poly(`${cx + ux * 8},${cy + uy * 8} ${cx - ux * 6 + nx * 4},${cy - uy * 6 + ny * 4} ${cx - ux * 6 - nx * 4},${cy - uy * 6 - ny * 4}`, "#6f99ab", .5);
  }));

  g.nodes.forEach(([x, y, label, size, tone, plate]) => {
    const el = document.createElement("span");
    el.className = `node s${size} t${tone} ${plate || ""}`;
    el.textContent = label;
    el.style.left = x - g.origin[0] + "px";
    el.style.top = y - g.origin[1] + "px";
    host.append(el);
  });
}

draw("graph-web", web);
draw("graph-twitter", twitter);
```
